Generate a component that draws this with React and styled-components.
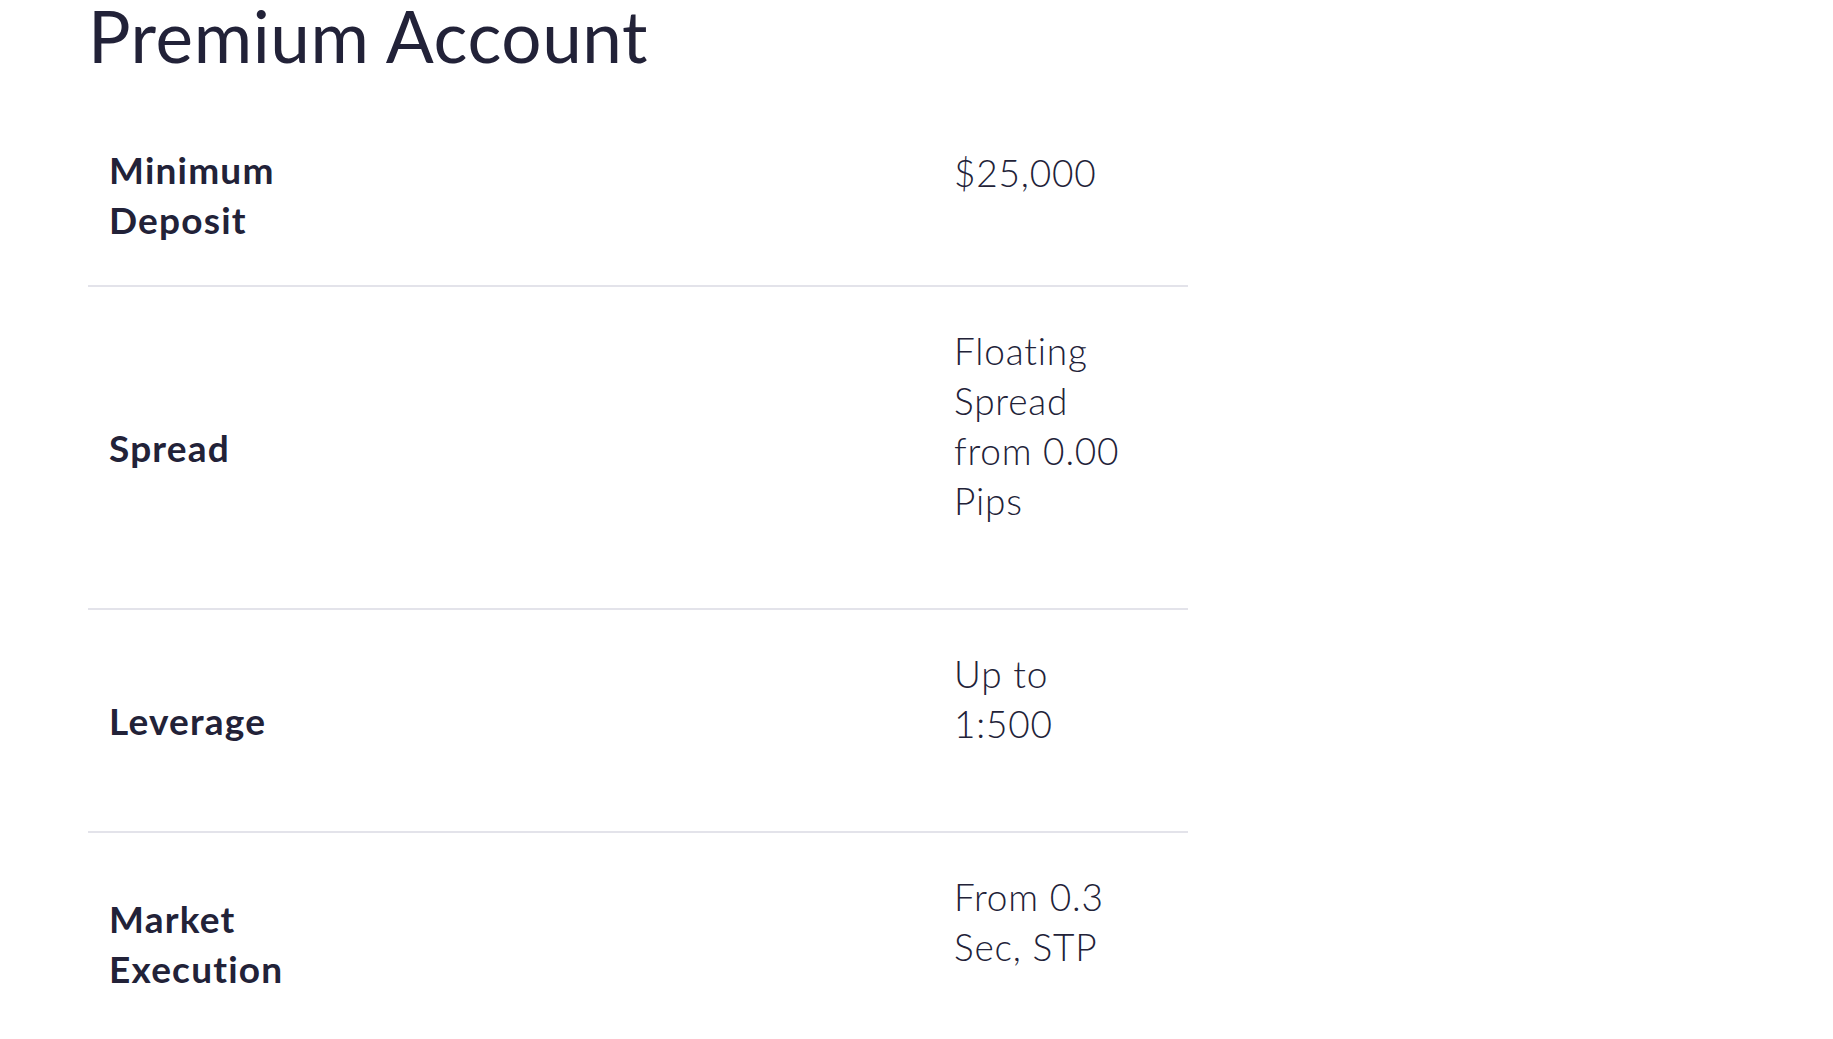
import React from 'react';
import styled, { createGlobalStyle } from 'styled-components';

const GlobalStyle = createGlobalStyle`
	body {
		margin: 0;
		background: #ffffff;
		font-family: 'Lato', 'Liberation Sans', sans-serif;
		color: #222238;
	}
`;

const Page = styled.div`
	padding: 0 0 0 88px;
	width: 1100px;
`;

const Title = styled.h1`
	margin: 0;
	font-size: 71px;
	font-weight: 400;
	line-height: 72px;
	letter-spacing: 0.6px;
	color: #222238;
`;

const Table = styled.div`
	margin-top: 33px;
	display: flex;
	flex-direction: column;
`;

const Row = styled.div`
	display: grid;
	grid-template-columns: 1fr 234px;
	border-bottom: ${(p) => (p.$last ? 'none' : '2px solid #e3e3ea')};
`;

const Label = styled.div`
	padding: 40px 21px;
	align-self: center;
	font-size: 37px;
	font-weight: 700;
	line-height: 50px;
	letter-spacing: 1.2px;
	width: 210px;
`;

const Value = styled.div`
	padding: ${(p) => (p.$first ? '43px' : '39px')} 54px 82px 0;
	font-size: 37px;
	font-weight: 300;
	line-height: 50px;
	letter-spacing: 0.8px;
	width: 180px;
`;

const rows = [
	{ label: 'Minimum Deposit', value: '$25,000' },
	{ label: 'Spread', value: 'Floating Spread from 0.00 Pips' },
	{ label: 'Leverage', value: 'Up to 1:500' },
	{ label: 'Market Execution', value: 'From 0.3 Sec, STP' }
];

export default function App() {
	return (
		<Page>
			<GlobalStyle />
			<Title>Premium Account</Title>
			<Table>
				{rows.map((r, i) => (
					<Row key={r.label} $last={i === rows.length - 1}>
						<Label>{r.label}</Label>
						<Value $first={i === 0}>{r.value}</Value>
					</Row>
				))}
			</Table>
		</Page>
	);
}
